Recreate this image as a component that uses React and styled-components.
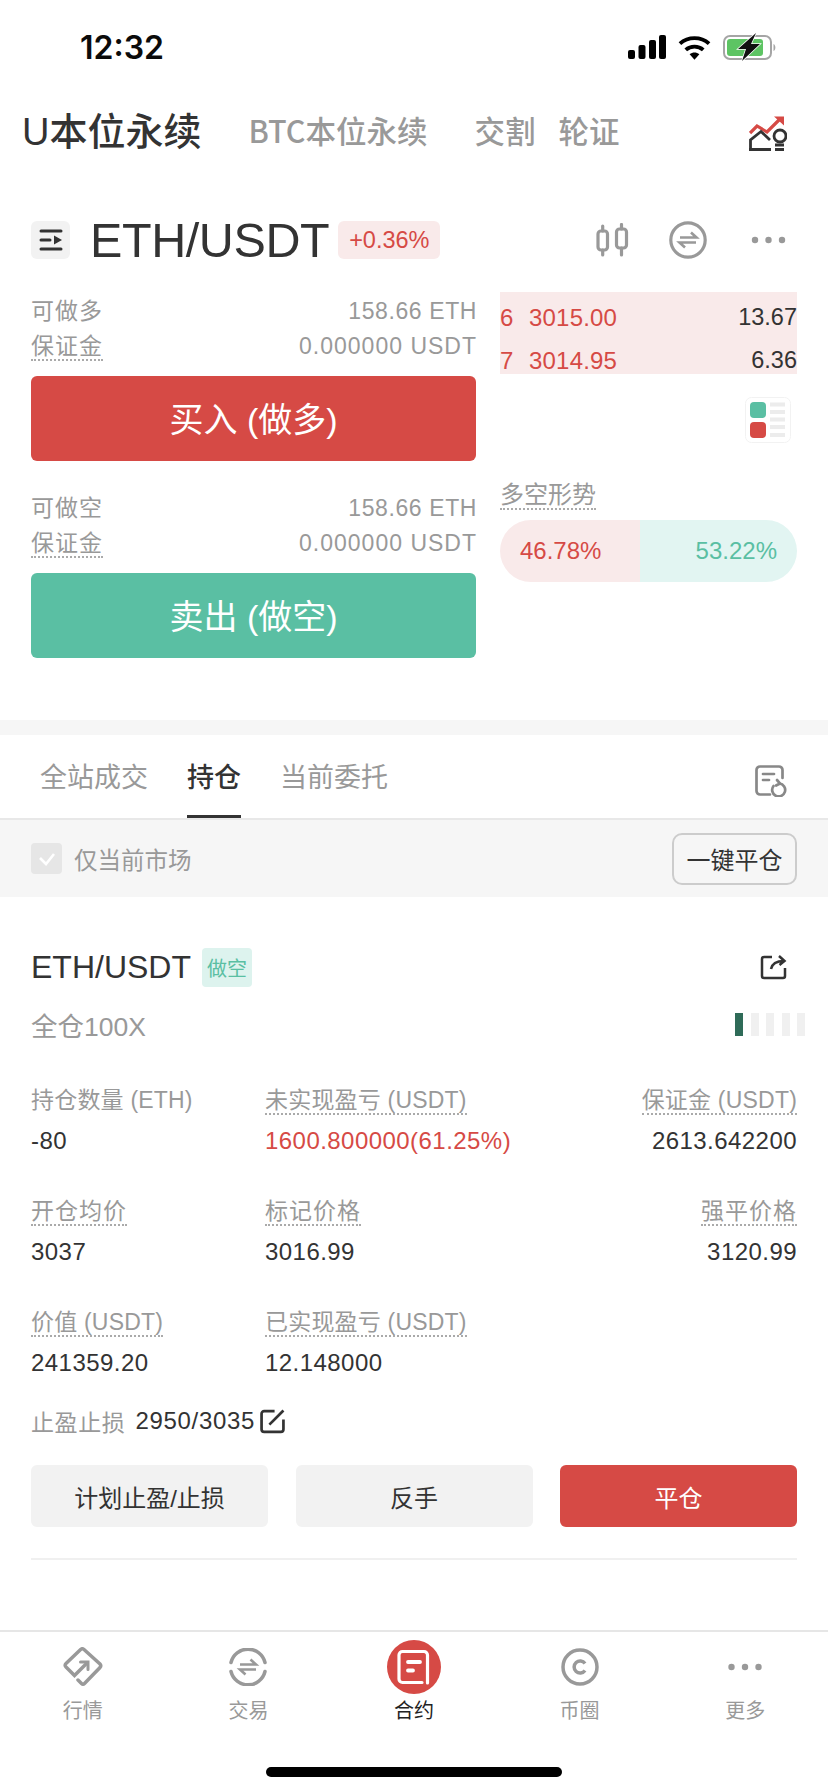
import React from "react";
import styled, { createGlobalStyle } from "styled-components";

const Global = createGlobalStyle`
  html, body { margin: 0; padding: 0; background: #fff; }
  * { box-sizing: border-box; }
  body { font-family: "Liberation Sans", "Noto Sans CJK SC", sans-serif; color: #333; }
`;
const Page = styled.div`width: 828px; height: 1792px; display: flex; flex-direction: column; background: #fff; overflow: hidden;`;
const StatusBar = styled.div`height: 94px; flex: none; display: flex; align-items: center; justify-content: space-between; padding: 0 51px 0 80px;`;
const Time = styled.div`font-size: 32px; color: #0b0b0b; font-family: "Inter", sans-serif; font-weight: 600;`;
const StatusIcons = styled.div`display: flex; align-items: center; gap: 12px;`;
const TopTabs = styled.div`height: 72px; flex: none; display: flex; align-items: center; padding: 0 41px 0 22px;`;
const MainTab = styled.div`font-size: 38px; font-weight: 500; color: #333; margin-right: 47px; white-space: nowrap; font-family: "Noto Sans CJK SC", sans-serif; line-height: 1;
  span { font-family: "Liberation Sans", sans-serif; }`;
const SubTab = styled.div`font-size: 30.5px; color: #999; margin-right: ${p => p.$gap}px; white-space: nowrap; font-family: "Noto Sans CJK SC", sans-serif; line-height: 1; font-weight: 500;`;
const Spacer = styled.div`flex: 1;`;
const IdeaWrap = styled.div`margin-top: 7px; display: flex;`;
const Market = styled.div`height: 78px; margin-top: 35px; flex: none; display: flex; align-items: center; padding: 0 42px 0 31px;`;
const MenuBox = styled.div`width: 39px; height: 38px; border-radius: 6px; background: #f2f2f2; display: flex; align-items: center; justify-content: center; margin-right: 20px;`;
const Pair = styled.div`font-size: 48.5px; color: #333; letter-spacing: -0.4px; margin-right: 9px; line-height: 1;`;
const Change = styled.div`height: 38px; width: 102px; border-radius: 6px; background: #f9eaea; color: #d64a45; font-size: 23.5px; display: flex; align-items: center; justify-content: center;`;
const MarketIcons = styled.div`display: flex; align-items: center; gap: 40px;`;
const DotsWrap = styled.div`display: flex; margin-left: 4px;`;
const Trade = styled.div`flex: none; display: flex; padding: 0 31px; gap: 24px; height: 428px; margin-top: 13px;`;
const LeftCol = styled.div`width: 445px; display: flex; flex-direction: column;`;
const RightCol = styled.div`width: 297px; display: flex; flex-direction: column;`;
const InfoRow = styled.div`display: flex; justify-content: space-between; align-items: center; height: 35px; font-size: 23px; letter-spacing: 1px; color: #999; white-space: nowrap;`;
const InfoValue = styled.span`margin-right: -1px; letter-spacing: ${p => p.$tight ? 0.6 : 1}px;`;
const Dotted = styled.span`border-bottom: 2px dotted ${p => p.$plain ? "transparent" : "#aaa"}; line-height: 26px; display: inline-block; font-size: ${p => p.$size || 23}px; letter-spacing: ${p => p.$wide ? "1px" : "inherit"}; color: #999; white-space: nowrap;`;
const TradeGroup = styled.div`display: flex; flex-direction: column; margin-top: ${p => p.$top}px;`;
const TradeBtn = styled.div`height: 85px; margin-top: 12px; padding-bottom: 3px; border-radius: 6px; background: ${p => p.$bg}; color: #fff; font-size: 34px; display: flex; align-items: center; justify-content: center;`;
const Book = styled.div`background: #f9eaea; height: 82px; padding-top: 4px; display: flex; flex-direction: column;`;
const BookRow = styled.div`height: 43px; flex: none; display: flex; align-items: center; font-size: 24px; letter-spacing: 0.2px; color: #d64a45;`;
const BookIdx = styled.span`width: 29px;`;
const BookQty = styled.span`margin-left: auto; color: #333; letter-spacing: 0; font-size: 23.5px;`;
const LayoutRow = styled.div`display: flex; justify-content: flex-end; margin-top: 23px; padding-right: 6px;`;
const TrendLabel = styled.div`margin-top: 39px;`;
const Pill = styled.div`margin-top: 10px; height: 62px; border-radius: 31px; overflow: hidden; display: flex; font-size: 24px;`;
const PillLeft = styled.div`width: 140px; background: #f9eaea; color: #d64a45; display: flex; align-items: center; padding-left: 20px;`;
const PillRight = styled.div`flex: 1; background: #e2f5f2; color: #5abfa3; display: flex; align-items: center; justify-content: flex-end; padding-right: 20px;`;
const Band = styled.div`height: 15px; flex: none; background: #f6f6f6;`;
const Tabs = styled.div`height: 85px; flex: none; border-bottom: 2px solid #e8e8e8; display: flex; padding: 0 41px 0 40px; gap: 39px; font-family: "Noto Sans CJK SC", sans-serif;`;
const Tab = styled.div`height: 83px; font-size: 27px; color: ${p => p.$active ? "#333" : "#999"}; padding-top: 22px; line-height: 38px; font-weight: ${p => p.$active ? 500 : 400};
  border-bottom: 3px solid ${p => p.$active ? "#333" : "transparent"};`;
const RecordWrap = styled.div`padding-top: 30px;`;
const Filter = styled.div`height: 77px; flex: none; background: #f6f6f6; display: flex; align-items: center; padding: 0 31px;`;
const Check = styled.div`width: 31px; height: 31px; border-radius: 4px; background: #e6e6e6; display: flex; align-items: center; justify-content: center; margin-right: 12px;`;
const FilterText = styled.div`font-size: 23.5px; color: #999;`;
const CloseAll = styled.div`margin-left: auto; width: 125px; height: 52px; border: 2px solid #ccc; border-radius: 10px; font-size: 24px; color: #333; display: flex; align-items: center; justify-content: center;`;
const Card = styled.div`flex: 1; padding: 0 31px; display: flex; flex-direction: column;`;
const CardHead = styled.div`height: 40px; margin-top: 50px; display: flex; align-items: center;`;
const CardPair = styled.div`font-size: 32px; color: #333; margin-right: 11px;`;
const SideTag = styled.div`width: 50px; height: 39px; border-radius: 4px; background: #ddf3ee; color: #5abfa3; font-size: 20px; display: flex; align-items: center; justify-content: center;`;
const ShareWrap = styled.div`display: flex; margin-right: 10px;`;
const LevRow = styled.div`height: 30px; margin-top: 22px; display: flex; align-items: center; justify-content: space-between; margin-right: -8px;`;
const Lev = styled.div`font-size: 26.5px; color: #999;`;
const Bars = styled.div`display: flex; gap: 7.5px;`;
const Bar = styled.div`width: 8px; height: 23px; background: ${p => p.$on ? "#2f6b58" : "#f0f0f0"};`;
const Stats = styled.div`margin-top: 48px; display: grid; grid-template-columns: 234px 1fr auto; row-gap: 42px; letter-spacing: 0.2px;`;
const Stat = styled.div`display: flex; flex-direction: column; gap: 11px; align-items: ${p => p.$right ? "flex-end" : "flex-start"};`;
const StatValue = styled.div`font-size: 24px; letter-spacing: 0.45px; line-height: 30px; color: ${p => p.$red ? "#d64a45" : "#333"};`;
const Plan = styled.div`display: flex; align-items: center; height: 30px; margin-top: 28px;`;
const PlanLabel = styled.span`font-size: 23px; letter-spacing: 0.6px; color: #999; margin-right: 10px;`;
const PlanValue = styled.span`color: #333; font-size: 24px; letter-spacing: 0.7px; margin-right: 5px;`;
const Actions = styled.div`display: grid; grid-template-columns: 237px 237px 237px; justify-content: space-between; margin-top: 29px;`;
const Action = styled.div`height: 62px; border-radius: 6px; background: ${p => p.$red ? "#d64a45" : "#f2f2f2"}; color: ${p => p.$red ? "#fff" : "#333"}; font-size: 24px; display: flex; align-items: center; justify-content: center;`;
const CardRule = styled.div`height: 2px; background: #f0f0f0; margin-top: 31px;`;
const Nav = styled.div`height: 92px; flex: none; border-top: 2px solid #e6e6e6; display: grid; grid-template-columns: repeat(5, 1fr);`;
const NavItem = styled.div`display: flex; flex-direction: column; align-items: center; padding-top: 8px; font-size: 20px; color: ${p => p.$active ? "#222" : "#999"};`;
const NavIcon = styled.div`height: 54px; display: flex; align-items: center; justify-content: center;`;
const NavLabel = styled.div`line-height: 24px; margin-top: 5px;`;
const HomeArea = styled.div`height: 70px; flex: none; display: flex; justify-content: center; padding-top: 45px;`;
const HomeBar = styled.div`width: 296px; height: 10px; border-radius: 5px; background: #000;`;

const Signal = () => (
  <svg width="38" height="24" viewBox="0 0 38 24" fill="#000"><rect x="0" y="15" width="7" height="9" rx="2"/><rect x="10.5" y="10" width="7" height="14" rx="2"/><rect x="21" y="5" width="7" height="19" rx="2"/><rect x="31" y="0" width="7" height="24" rx="2"/></svg>
);
const Wifi = () => (
  <svg width="33" height="25" viewBox="0 0 34 25" fill="none"><path d="M2 8.5C10.5 1 23.5 1 32 8.5" stroke="#000" strokeWidth="4" /><path d="M8 15C13 10.5 21 10.5 26 15" stroke="#000" strokeWidth="4"/><path d="M12 19.5C15 17 19 17 22 19.5L17 25Z" fill="#000"/></svg>
);
const Battery = () => (
  <svg width="54" height="28" viewBox="0 0 54 28" fill="none"><rect x="1" y="3" width="47" height="23" rx="6" stroke="#a5a5a5" strokeWidth="2"/><rect x="4" y="6" width="36" height="17" rx="3" fill="#5dc463"/><path d="M50.5 11c2.5 1 2.5 6 0 7z" fill="#a5a5a5"/><path d="M33 0 15 16h8l-4 12 18-17h-9z" fill="#111" stroke="#fff" strokeWidth="1.5" paintOrder="stroke"/></svg>
);
const IdeaIcon = () => (
  <svg width="38" height="35" viewBox="0 0 38 35" fill="none"><path d="M1 17 8 10l10 6L31 3" stroke="#d64a45" strokeWidth="3.2"/><path d="M25 .5h10v9z" fill="#d64a45"/><path d="M1.5 32V24L12 15.5l9 8.5" stroke="#333" strokeWidth="2.8"/><path d="M0 33.5h22" stroke="#333" strokeWidth="3"/><circle cx="31" cy="20" r="6" stroke="#333" strokeWidth="2.8"/><path d="M26 29h9M26 33.5h9" stroke="#333" strokeWidth="2.8"/></svg>
);
const MenuIcon = () => (
  <svg width="24" height="24" viewBox="0 0 24 24" fill="none" stroke="#333" strokeWidth="3" strokeLinecap="round"><path d="M2 3h20M2 12h9M2 21h20"/><path d="M15 7.5l8 4.5-8 4.5z" fill="#333" stroke="none"/></svg>
);
const CandleIcon = () => (
  <svg width="33" height="34" viewBox="0 0 33 34" fill="none" stroke="#999" strokeWidth="3.2" strokeLinecap="round"><rect x="2" y="8" width="9.5" height="19" rx="3"/><rect x="20.5" y="6" width="10" height="19" rx="3"/><path d="M6.7 3v5M6.7 27v5M25.5 1.5V6M25.5 25v7"/></svg>
);
const SwapIcon = () => (
  <svg width="38" height="38" viewBox="0 0 38 38" fill="none" stroke="#999"><circle cx="19" cy="19" r="17.2" strokeWidth="3.2"/><path d="M11 16.5h16.5l-5.5-5" strokeWidth="2.6"/><path d="M27 21.5H10.5l5.5 5" strokeWidth="2.6"/></svg>
);
const Dots = ({ w = 35 }) => (
  <svg width={w} height="10" viewBox="0 0 35 10" fill="#999"><circle cx="4" cy="5" r="3.2"/><circle cx="17.5" cy="5" r="3.2"/><circle cx="31" cy="5" r="3.2"/></svg>
);
const LayoutIcon = () => (
  <svg width="46" height="46" viewBox="0 0 46 46" fill="none"><rect x=".5" y=".5" width="45" height="45" rx="6" stroke="#f2f2f2"/><rect x="5" y="5" width="16" height="16" rx="4" fill="#5abfa3"/><rect x="5" y="25" width="16" height="16" rx="4" fill="#d64a45"/><path d="M25 7.5h15M25 15h15M25 22.5h15M25 30h15M25 38h15" stroke="#ececec" strokeWidth="4"/></svg>
);
const RecordIcon = () => (
  <svg width="32" height="32" viewBox="0 0 32 32" fill="none" stroke="#888" strokeWidth="2.7" strokeLinecap="round"><path d="M15 29.5H5a3.5 3.5 0 0 1-3.5-3.5V5A3.5 3.5 0 0 1 5 1.5h19A3.5 3.5 0 0 1 27.5 5v8"/><path d="M8 9h11M8 15h6"/><path d="M18.5 21a6.5 6.5 0 1 0 6-2.5"/><path d="M22 15l3 3.5-4 2"/></svg>
);
const ShareIcon = () => (
  <svg width="27" height="26" viewBox="0 0 27 26" fill="none" stroke="#333" strokeWidth="2.5"><path d="M12 3H4a2 2 0 0 0-2 2v17a2 2 0 0 0 2 2h19a2 2 0 0 0 2-2v-8"/><path d="M11 15c1-5 5-8 13-8M19 2l5.500 5-5 4"/></svg>
);
const EditIcon = () => (
  <svg width="25" height="25" viewBox="0 0 24 24" fill="none" stroke="#333" strokeWidth="2.6"><path d="M14 2H4a2.5 2.5 0 0 0-2.5 2.5v15A2.5 2.5 0 0 0 4 22h16a2.5 2.5 0 0 0 2.5-2.5V10"/><path d="M9 15 22.5 1.5"/></svg>
);
const CheckMark = () => (
  <svg width="18" height="14" viewBox="0 0 18 14" fill="none" stroke="#fff" strokeWidth="2.6"><path d="M2 6l6 6 8-10"/></svg>
);
const MarketNav = () => (
  <svg width="40" height="40" viewBox="0 0 40 40" fill="none" stroke="#999" strokeWidth="3.5" strokeLinecap="round"><path d="M15 33l3.500 3.500q1.500 1.500 3 0L37 20.500q1.500-1.800 0-3.500L21 2.500q-1.700-1.500-3.400 0L3 16.500q-1.800 1.800 0 3.500l8.500 8.500L24 16"/><path d="M17.5 15H25v7.5" strokeLinejoin="miter" strokeWidth="3"/></svg>
);
const TradeNav = () => (
  <svg width="38" height="38" viewBox="0 0 38 38" fill="none" stroke="#999" strokeWidth="3.5" strokeLinecap="round"><path d="M2 14.5A17.5 17.5 0 0 1 36 14.5M2 23.5A17.5 17.5 0 0 0 36 23.5"/><path d="M11 16.5h16l-5.500-5M27 21.5H11l5.500 5" strokeWidth="2.6" strokeLinecap="butt"/></svg>
);
const ContractNav = () => (
  <svg width="54" height="54" viewBox="0 0 54 54" fill="none" stroke="#fff" strokeLinecap="round"><circle cx="27" cy="27" r="27" fill="#d64a45" stroke="none"/><path d="M35 42.5H15.5A3.5 3.5 0 0 1 12 39V15A3.5 3.5 0 0 1 15.5 11.5H37A3.5 3.5 0 0 1 40.5 15V43" strokeWidth="3.2"/><path d="M21 22h12M21 30.5h5" strokeWidth="3.8"/></svg>
);
const CoinNav = () => (
  <svg width="38" height="38" viewBox="0 0 38 38" fill="none" stroke="#999" strokeWidth="3.5"><circle cx="19" cy="19" r="17"/><path d="M24 15.5a6 6 0 1 0 0 7"/></svg>
);

export default function App() {
  return (
    <Page>
      <Global />
      <StatusBar>
        <Time>12:32</Time>
        <StatusIcons><Signal /><Wifi /><Battery /></StatusIcons>
      </StatusBar>
      <TopTabs>
        <MainTab><span>U</span>本位永续</MainTab>
        <SubTab $gap={47}>BTC本位永续</SubTab>
        <SubTab $gap={23}>交割</SubTab>
        <SubTab $gap={0}>轮证</SubTab>
        <Spacer />
        <IdeaWrap><IdeaIcon /></IdeaWrap>
      </TopTabs>
      <Market>
        <MenuBox><MenuIcon /></MenuBox>
        <Pair>ETH/USDT</Pair>
        <Change>+0.36%</Change>
        <Spacer />
        <MarketIcons><CandleIcon /><SwapIcon /><DotsWrap><Dots /></DotsWrap></MarketIcons>
      </Market>
      <Trade>
        <LeftCol>
          <TradeGroup $top={2}>
            <InfoRow><Dotted $plain>可做多</Dotted><InfoValue $tight>158.66 ETH</InfoValue></InfoRow>
            <InfoRow><Dotted>保证金</Dotted><InfoValue>0.000000 USDT</InfoValue></InfoRow>
            <TradeBtn $bg="#d64a45">买入 (做多)</TradeBtn>
          </TradeGroup>
          <TradeGroup $top={30}>
            <InfoRow><Dotted $plain>可做空</Dotted><InfoValue $tight>158.66 ETH</InfoValue></InfoRow>
            <InfoRow><Dotted>保证金</Dotted><InfoValue>0.000000 USDT</InfoValue></InfoRow>
            <TradeBtn $bg="#5abfa3">卖出 (做空)</TradeBtn>
          </TradeGroup>
        </LeftCol>
        <RightCol>
          <Book>
            <BookRow><BookIdx>6</BookIdx><span>3015.00</span><BookQty>13.67</BookQty></BookRow>
            <BookRow><BookIdx>7</BookIdx><span>3014.95</span><BookQty>6.36</BookQty></BookRow>
          </Book>
          <LayoutRow><LayoutIcon /></LayoutRow>
          <TrendLabel><Dotted $size={24}>多空形势</Dotted></TrendLabel>
          <Pill><PillLeft>46.78%</PillLeft><PillRight>53.22%</PillRight></Pill>
        </RightCol>
      </Trade>
      <Band />
      <Tabs>
        <Tab>全站成交</Tab>
        <Tab $active>持仓</Tab>
        <Tab>当前委托</Tab>
        <Spacer />
        <RecordWrap><RecordIcon /></RecordWrap>
      </Tabs>
      <Filter>
        <Check><CheckMark /></Check>
        <FilterText>仅当前市场</FilterText>
        <CloseAll>一键平仓</CloseAll>
      </Filter>
      <Card>
        <CardHead>
          <CardPair>ETH/USDT</CardPair>
          <SideTag>做空</SideTag>
          <Spacer />
          <ShareWrap><ShareIcon /></ShareWrap>
        </CardHead>
        <LevRow>
          <Lev>全仓100X</Lev>
          <Bars><Bar $on /><Bar /><Bar /><Bar /><Bar /></Bars>
        </LevRow>
        <Stats>
          <Stat><Dotted $plain>持仓数量 (ETH)</Dotted><StatValue>-80</StatValue></Stat>
          <Stat><Dotted>未实现盈亏 (USDT)</Dotted><StatValue $red>1600.800000(61.25%)</StatValue></Stat>
          <Stat $right><Dotted>保证金 (USDT)</Dotted><StatValue>2613.642200</StatValue></Stat>
          <Stat><Dotted $wide>开仓均价</Dotted><StatValue>3037</StatValue></Stat>
          <Stat><Dotted $wide>标记价格</Dotted><StatValue>3016.99</StatValue></Stat>
          <Stat $right><Dotted $wide>强平价格</Dotted><StatValue>3120.99</StatValue></Stat>
          <Stat><Dotted>价值 (USDT)</Dotted><StatValue>241359.20</StatValue></Stat>
          <Stat><Dotted>已实现盈亏 (USDT)</Dotted><StatValue>12.148000</StatValue></Stat>
        </Stats>
        <Plan><PlanLabel>止盈止损</PlanLabel><PlanValue>2950/3035</PlanValue><EditIcon /></Plan>
        <Actions>
          <Action>计划止盈/止损</Action>
          <Action>反手</Action>
          <Action $red>平仓</Action>
        </Actions>
        <CardRule />
      </Card>
      <Nav>
        <NavItem><NavIcon><MarketNav /></NavIcon><NavLabel>行情</NavLabel></NavItem>
        <NavItem><NavIcon><TradeNav /></NavIcon><NavLabel>交易</NavLabel></NavItem>
        <NavItem $active><NavIcon><ContractNav /></NavIcon><NavLabel>合约</NavLabel></NavItem>
        <NavItem><NavIcon><CoinNav /></NavIcon><NavLabel>币圈</NavLabel></NavItem>
        <NavItem><NavIcon><Dots w={40} /></NavIcon><NavLabel>更多</NavLabel></NavItem>
      </Nav>
      <HomeArea><HomeBar /></HomeArea>
    </Page>
  );
}
